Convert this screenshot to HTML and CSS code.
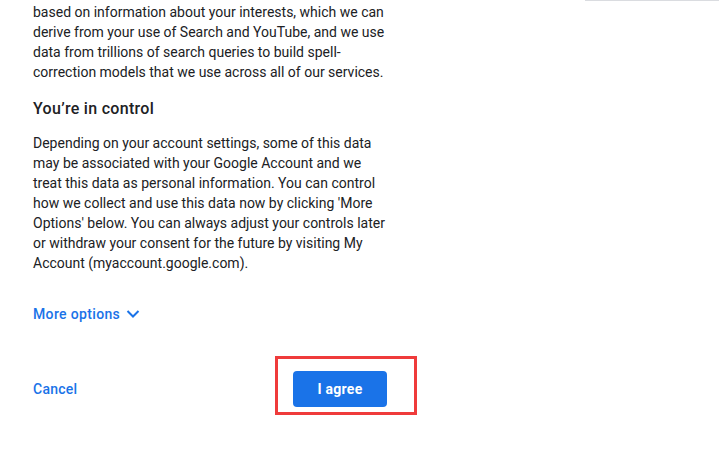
FILE: index.html
```html
<!DOCTYPE html>
<html lang="en">
<head>
    <meta charset="UTF-8">
    <meta name="viewport" content="width=device-width, initial-scale=1.0">
    <title>Privacy and Terms</title>
    <link rel="stylesheet" href="styles.css">
</head>
<body>
    <div class="top-rule"></div>
    <div class="container">
        <p class="text">based on information about your interests, which we can derive from your use of Search and YouTube, and we use data from trillions of search queries to build spell-correction models that we use across all of our services.</p>

        <h2 class="section-title">You’re in control</h2>

        <p class="text">Depending on your account settings, some of this data may be associated with your Google Account and we treat this data as personal information. You can control how we collect and use this data now by clicking 'More Options' below. You can always adjust your controls later or withdraw your consent for the future by visiting My Account (myaccount.google.com).</p>

        <button class="more-options" type="button">
            More options
            <svg width="14" height="10" viewBox="0 0 14 10">
                <path d="M1.5 2 L7 7.5 L12.5 2" fill="none" stroke="#1a73e8" stroke-width="2"/>
            </svg>
        </button>

        <div class="actions">
            <button class="btn-cancel" type="button">Cancel</button>
            <div class="agree-wrap">
                <button class="btn-agree" type="button">I agree</button>
                <!-- highlight box from the screenshot -->
                <span class="highlight"></span>
            </div>
        </div>
    </div>
</body>
</html>
```

FILE: styles.css
```css
body {
    margin: 0;
    padding: 0;
    min-height: 461px;
    background-color: #fff;
    font-family: Roboto, "Liberation Sans", Arial, sans-serif;
    color: #202124;
}
.top-rule {
    height: 1px;
    margin-left: 585px;
    background-color: #dadce0;
}
.container {
    width: 356px;
    padding: 1px 0 60px 33px;
}
.text {
    margin: 0;
    font-size: 14px;
    line-height: 20px;
}
.section-title {
    margin: 15px 0 12px;
    font-size: 16px;
    line-height: 24px;
    font-weight: 500;
    letter-spacing: 0.3px;
}
.more-options {
    display: flex;
    align-items: center;
    gap: 6px;
    margin-top: 31px;
    padding: 0;
    border: none;
    background: none;
    font-family: inherit;
    font-size: 14px;
    line-height: 20px;
    font-weight: 500;
    letter-spacing: 0.35px;
    color: #1a73e8;
    cursor: pointer;
}
.actions {
    display: flex;
    justify-content: space-between;
    align-items: center;
    width: 354px;
    margin-top: 47px;
}
.btn-cancel {
    padding: 0;
    border: none;
    background: none;
    font-family: inherit;
    font-size: 14px;
    font-weight: 500;
    letter-spacing: 0.25px;
    color: #1a73e8;
    cursor: pointer;
}
.agree-wrap {
    position: relative;
}
.btn-agree {
    display: block;
    width: 94px;
    height: 36px;
    border: none;
    border-radius: 4px;
    background-color: #1a73e8;
    color: #fff;
    font-family: inherit;
    font-size: 14px;
    font-weight: 700;
    letter-spacing: 0.25px;
    cursor: pointer;
}
.highlight {
    position: absolute;
    left: -18px;
    top: -15px;
    width: 136px;
    height: 53px;
    border: 3px solid #ef3b3b;
    pointer-events: none;
}
```
